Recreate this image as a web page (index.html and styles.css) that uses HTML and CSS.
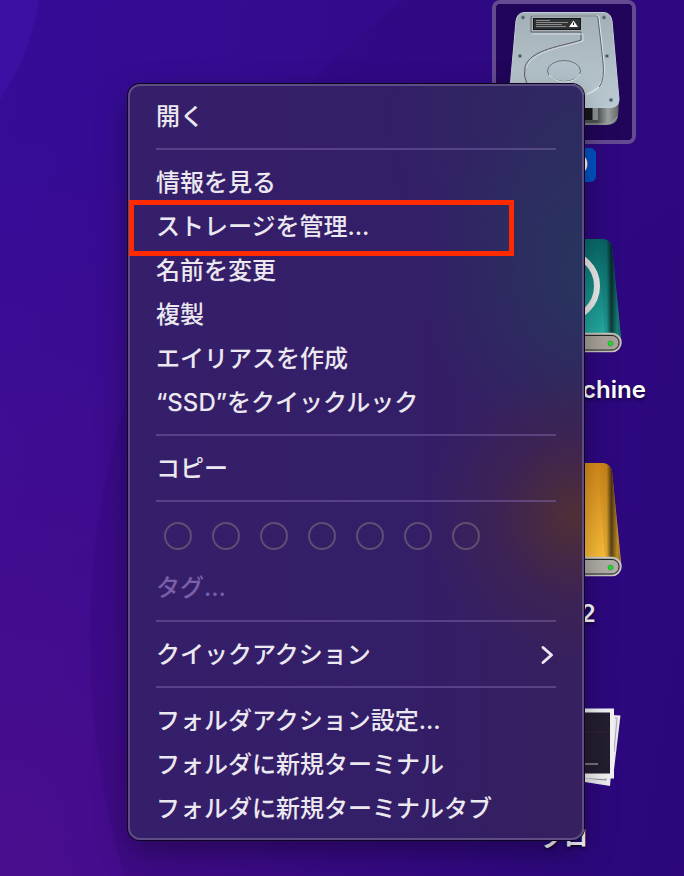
FILE: index.html
```html
<!DOCTYPE html>
<html lang="ja">
<head>
    <meta charset="UTF-8">
    <meta name="viewport" content="width=device-width, initial-scale=1.0">
    <title>デスクトップ</title>
    <link rel="stylesheet" href="styles.css">
</head>
<body>
    <main class="desktop">
        <div class="icons">
            <div class="icon selected">
                <svg class="icon-image" viewBox="0 0 144 144" aria-hidden="true">
                    <defs>
                        <linearGradient id="plate" x1="0" y1="0" x2="0" y2="1">
                            <stop offset="0" stop-color="#a3afb7"/>
                            <stop offset="1" stop-color="#bccbd3"/>
                        </linearGradient>
                        <linearGradient id="case" x1="0" y1="0" x2="1" y2="0">
                            <stop offset="0" stop-color="#6d7273"/>
                            <stop offset=".8" stop-color="#4c5051"/>
                            <stop offset=".9" stop-color="#9da3a3"/>
                            <stop offset="1" stop-color="#606566"/>
                        </linearGradient>
                    </defs>
                    <path d="M17 100H127L126 117Q124 125 114 125H30Q19 125 18 117Z" fill="url(#case)"/>
                    <path d="M92 108h8v12h-8z" fill="#141617"/>
                    <path d="M101 108h5v12h-5z" fill="#8b9293"/>
                    <path d="M20 120Q25 124 32 124H112Q122 123 125 117" fill="none" stroke="#a5abaa"/>
                    <path d="M32 12.500H112Q119 13 120 21L127 99Q127 107 119 107.500H25Q17 107 17 99L24 21Q25 13 32 12.500Z" fill="url(#plate)" stroke="#c3ced4"/>
                    <path d="M40 16H105Q107 16 107 19L112 65Q114 88 95 94" fill="none" stroke="#dbe6eb" stroke-width="1.500"/>
                    <path d="M39 32V17Q39 16 41 16H104Q106 16 106 18L111 62Q113 80 107 87" fill="none" stroke="#5c6164"/>
                    <path d="M39 32H89V40C72 46 38 49 33 67Q31 76 35 84" fill="none" stroke="#5f575c"/>
                    <path d="M40 34H91V41C74 47 40 50 34 68" fill="none" stroke="#d0dde3"/>
                    <ellipse cx="72" cy="71" rx="16.500" ry="10.500" fill="#b3c2ca" stroke="#6b757a"/>
                    <path d="M57 75Q63 82 73 82T88 74" fill="none" stroke="#e6f0f4"/>
                    <rect x="41.500" y="18.500" width="47" height="11" fill="#303234" stroke="#141516"/>
                    <path d="M44 20.500H58M44 22.500H76M44 24.500H70M44 26.500H74" stroke="#a3a7a9" stroke-width=".8"/>
                    <path d="M81.500 20.500 86 27H77Z" fill="#fff"/>
                    <path d="M81.500 22.500v2.500" stroke="#222"/>
                    <g fill="#42515a" stroke="#8a9aa3">
                        <circle cx="31" cy="17.500" r="1.800"/>
                        <circle cx="112" cy="17.500" r="1.800"/>
                        <circle cx="28" cy="56" r="1.800"/>
                        <circle cx="115" cy="56" r="1.800"/>
                        <circle cx="119" cy="100" r="1.800"/>
                    </g>
                </svg>
                <span class="icon-label">SSD</span>
            </div>

            <div class="icon">
                <svg class="icon-image" viewBox="0 0 144 144" aria-hidden="true">
                    <defs>
                        <linearGradient id="teal" x1="0" y1="0" x2="0" y2="1">
                            <stop offset="0" stop-color="#08686a"/>
                            <stop offset="1" stop-color="#25b0a4"/>
                        </linearGradient>
                        <linearGradient id="edge" x1="0" y1="0" x2="1" y2="0">
                            <stop offset="0" stop-color="#000" stop-opacity="0"/>
                            <stop offset=".4" stop-color="#000" stop-opacity=".1"/>
                            <stop offset=".6" stop-color="#000" stop-opacity=".65"/>
                            <stop offset=".85" stop-color="#000" stop-opacity=".25"/>
                            <stop offset="1" stop-color="#000" stop-opacity=".5"/>
                        </linearGradient>
                    </defs>
                    <path d="M32 15H112Q118 16 120 23L129 114H15L24 23Q26 16 32 15Z" fill="url(#teal)"/>
                    <path d="M105 15H112Q118 16 120 23L129 118L113 110Z" fill="url(#edge)"/>
                    <circle cx="72" cy="62" r="33" fill="none" stroke="#ececec" stroke-width="6"/>
                    <rect x="15" y="109.500" width="114" height="18" rx="9" fill="#a09b91" stroke="#c7c4bd" stroke-width="1.500"/>
                    <rect x="17" y="111.500" width="110" height="14.500" rx="7" fill="#a9a399" stroke="#25292a"/>
                    <circle cx="118.500" cy="119.500" r="2.500" fill="#24d83a" stroke="#168c25" stroke-width=".5"/>
                </svg>
                <span class="icon-label">Time Machine</span>
            </div>

            <div class="icon">
                <svg class="icon-image" viewBox="0 0 144 144" aria-hidden="true">
                    <defs>
                        <linearGradient id="orange" x1="0" y1="0" x2="0" y2="1">
                            <stop offset="0" stop-color="#d98d1b"/>
                            <stop offset="1" stop-color="#ffc23a"/>
                        </linearGradient>
                    </defs>
                    <path d="M32 15H112Q118 16 120 23L129 114H15L24 23Q26 16 32 15Z" fill="url(#orange)"/>
                    <path d="M105 15H112Q118 16 120 23L129 118L113 110Z" fill="url(#edge)"/>
                    <rect x="15" y="109.500" width="114" height="18" rx="9" fill="#a5a49e" stroke="#c9c9c5" stroke-width="1.500"/>
                    <rect x="17" y="111.500" width="110" height="14.500" rx="7" fill="#b0aea6" stroke="#25292a"/>
                    <circle cx="118.500" cy="119.500" r="2.500" fill="#24d83a" stroke="#168c25" stroke-width=".5"/>
                </svg>
                <span class="icon-label">SSD2</span>
            </div>

            <div class="icon">
                <svg class="icon-image" viewBox="0 0 144 144" aria-hidden="true">
                    <path d="M30 38 128.500 43.500 121 106H30Z" fill="#e9e8ec"/>
                    <path d="M123 46 125 46 122 80" fill="none" stroke="#aaa8b0"/>
                    <path d="M30 90 120 90 118 114 30 100Z" fill="#ededf0"/>
                    <path d="M30 100 114 108V105" fill="none" stroke="#85838c"/>
                    <rect x="22" y="36.500" width="100" height="70" fill="#f2f1f4"/>
                    <rect x="26" y="40.500" width="92" height="61" fill="#241d30"/>
                    <path d="M27 60H117" stroke="#302839"/>
                    <path d="M86 92H106" stroke="#77727d" stroke-width="2"/>
                </svg>
                <span class="icon-label">クロ</span>
            </div>
        </div>

        <menu class="context-menu">
            <li><button type="button">開く</button></li>
            <li class="separator"></li>
            <li><button type="button">情報を見る</button></li>
            <li class="marked"><button type="button">ストレージを管理…</button></li>
            <li><button type="button">名前を変更</button></li>
            <li><button type="button">複製</button></li>
            <li><button type="button">エイリアスを作成</button></li>
            <li><button type="button">“SSD”をクイックルック</button></li>
            <li class="separator"></li>
            <li><button type="button">コピー</button></li>
            <li class="separator"></li>
            <li class="tags">
                <button type="button" aria-label="レッド"></button>
                <button type="button" aria-label="オレンジ"></button>
                <button type="button" aria-label="イエロー"></button>
                <button type="button" aria-label="グリーン"></button>
                <button type="button" aria-label="ブルー"></button>
                <button type="button" aria-label="パープル"></button>
                <button type="button" aria-label="グレイ"></button>
            </li>
            <li><button type="button" disabled>タグ…</button></li>
            <li class="separator"></li>
            <li>
                <button type="button">
                    クイックアクション
                    <svg class="chevron" viewBox="0 0 16 20" aria-hidden="true">
                        <path d="M3 2.500 11.500 10 3 17.500"/>
                    </svg>
                </button>
            </li>
            <li class="separator"></li>
            <li><button type="button">フォルダアクション設定…</button></li>
            <li><button type="button">フォルダに新規ターミナル</button></li>
            <li><button type="button">フォルダに新規ターミナルタブ</button></li>
        </menu>
    </main>
</body>
</html>
```
FILE: styles.css
```css
* {
    box-sizing: border-box;
}

body {
    margin: 0;
    font-family: Inter, "Noto Sans CJK JP", sans-serif;
    font-size: 24px;
    color: #ebe8f0;
}

.desktop {
    position: relative;
    min-height: 100vh;
    overflow: hidden;
    background:
        radial-gradient(circle at -210px -40px, #3b12a6 0, #3b10a2 251px, transparent 253px),
        radial-gradient(circle at 900px 640px, rgba(30, 0, 100, 0.2) 0, rgba(30, 0, 100, 0.15) 809px, transparent 812px),
        radial-gradient(ellipse at 0% 100%, rgba(78, 14, 140, 0.8), transparent 60%),
        linear-gradient(100deg, #360c98 0%, #340a8c 45%, #2e0880 100%);
}

/* Desktop icons */
.icons {
    position: absolute;
    top: 0;
    right: 40px;
    width: 160px;
}

.icon {
    display: flex;
    flex-direction: column;
    align-items: center;
    gap: 4px;
    height: 224px;
}

.icon-image {
    flex: none;
    width: 144px;
    height: 144px;
}

.icon-label {
    padding: 0 8px;
    border-radius: 6px;
    line-height: 36px;
    font-weight: 600;
    color: #fff;
    white-space: nowrap;
    text-shadow: 0 2px 3px rgba(0, 0, 0, 0.6);
}

.selected .icon-image {
    border-radius: 8px;
    background-color: #21055a;
    box-shadow: inset 0 0 0 4px #644a91;
}

.selected .icon-label {
    line-height: 34px;
    background-color: #0053c6;
    text-shadow: none;
}

/* Context menu */
.context-menu {
    position: absolute;
    top: 84px;
    left: 128px;
    right: 100px;
    margin: 0;
    padding: 8px 0;
    list-style: none;
    border: 2px solid #5d4d82;
    border-radius: 12px;
    background:
        radial-gradient(circle at 445px 430px, rgba(84, 50, 46, 0.85), rgba(74, 40, 60, 0.35) 80px, transparent 150px),
        radial-gradient(circle at 470px 190px, rgba(34, 60, 94, 0.8), transparent 180px),
        radial-gradient(circle at 440px 30px, rgba(44, 46, 98, 0.75), transparent 190px),
        linear-gradient(90deg, #361f6a, #331e68 60%, #36205f);
    box-shadow: 0 0 0 1px #0c0420, 0 12px 32px rgba(0, 0, 0, 0.35);
}

.context-menu button {
    display: flex;
    align-items: center;
    justify-content: space-between;
    width: 100%;
    height: 44px;
    padding: 2px 26px 0;
    border: none;
    background: none;
    font: inherit;
    font-weight: 500;
    line-height: 42px;
    color: inherit;
    text-align: left;
    white-space: nowrap;
}

.context-menu button:disabled {
    padding-top: 0;
    color: #7a60a8;
}

.separator {
    height: 2px;
    margin: 10px 26px;
    background-color: rgba(132, 108, 180, 0.45);
}

.marked {
    position: relative;
}

.marked::after {
    content: "";
    position: absolute;
    inset: -4px 68px -8px -1px;
    border: 5px solid #ff2a00;
    pointer-events: none;
}

.context-menu .tags {
    display: flex;
    gap: 20px;
    padding: 10px 34px 16px;
}

.context-menu .tags button {
    width: 28px;
    height: 28px;
    padding: 0;
    border: 2px solid #5e4f70;
    border-radius: 50%;
}

.chevron {
    width: 16px;
    height: 20px;
    fill: none;
    stroke: #ebe8f0;
    stroke-width: 3;
    stroke-linecap: round;
    stroke-linejoin: round;
}
```
